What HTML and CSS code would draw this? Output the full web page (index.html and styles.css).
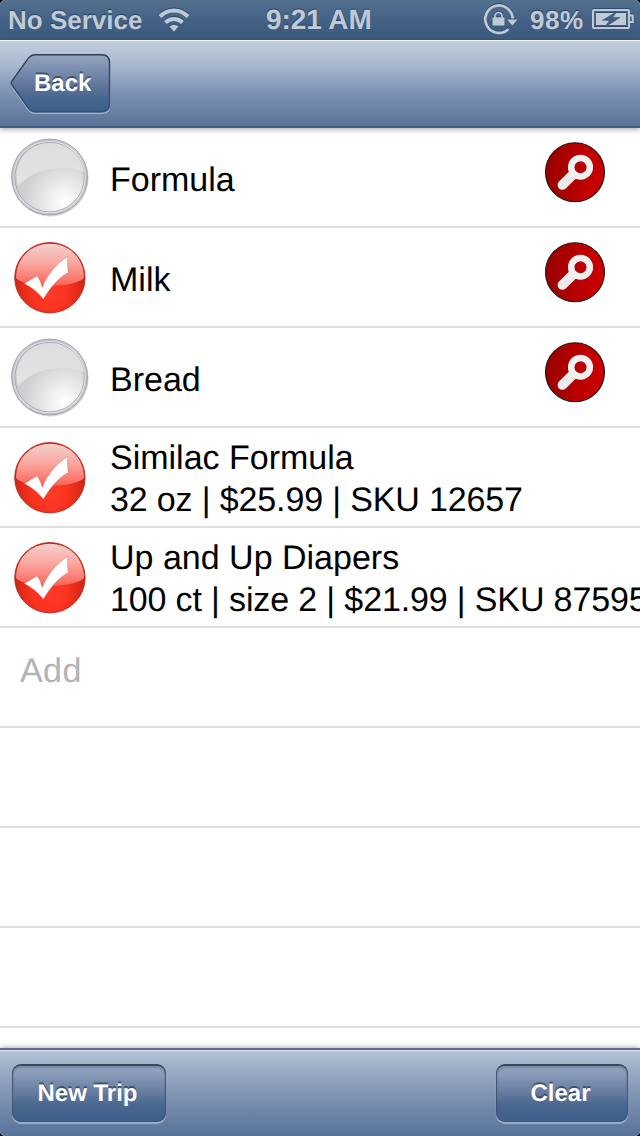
FILE: index.html
```html
<!DOCTYPE html>
<html lang="en">
<head>
<meta charset="utf-8">
<title>Shopping List</title>
<link rel="stylesheet" href="styles.css">
</head>
<body>
<svg class="defs" width="0" height="0" aria-hidden="true">
  <defs>
    <linearGradient id="btn" x1="0" y1="0" x2="0" y2="1"><stop offset="0" stop-color="#94a5bf"/><stop offset=".5" stop-color="#64799f"/><stop offset=".75" stop-color="#48678f"/><stop offset="1" stop-color="#3e5e8b"/></linearGradient>
    <linearGradient id="btnEdge" x1="0" y1="0" x2="0" y2="1"><stop offset="0" stop-color="#343f50"/><stop offset="1" stop-color="#34517a"/></linearGradient>
    <linearGradient id="rim" x1="0" y1="0" x2="1" y2="1"><stop offset="0" stop-color="#dcdce2"/><stop offset=".25" stop-color="#c0c0ca"/><stop offset=".5" stop-color="#d4d4dc"/><stop offset=".75" stop-color="#c4c4ce"/><stop offset="1" stop-color="#e2e2e8"/></linearGradient>
    <radialGradient id="glass" cx=".72" cy=".85" r=".75"><stop offset="0" stop-color="#fff"/><stop offset=".2" stop-color="#f4f4f4"/><stop offset=".75" stop-color="#d2d2d2"/><stop offset="1" stop-color="#c9c9c9"/></radialGradient>
    <linearGradient id="glassTop" x1="0" y1="0" x2="0" y2="1"><stop offset="0" stop-color="#dddddd"/><stop offset="1" stop-color="#e3e3e3"/></linearGradient>
    <radialGradient id="ball" cx=".5" cy=".7" r=".56"><stop offset="0" stop-color="#ff3a27"/><stop offset=".45" stop-color="#fb3321"/><stop offset=".8" stop-color="#d92817"/><stop offset="1" stop-color="#bd2213"/></radialGradient>
    <linearGradient id="ballTop" x1="0" y1="0" x2="0" y2="1"><stop offset="0" stop-color="#f3d0cc"/><stop offset=".45" stop-color="#fba9a2"/><stop offset="1" stop-color="#f8655a"/></linearGradient>
    <linearGradient id="key" x1="0" y1="0" x2="1" y2="0"><stop offset="0" stop-color="#9b0000"/><stop offset=".3" stop-color="#a80000"/><stop offset=".65" stop-color="#be0000"/><stop offset="1" stop-color="#cc0000"/></linearGradient>
    <symbol id="empty" viewBox="0 0 80 80">
      <circle cx="40.300" cy="40.200" r="38.300" fill="#999" opacity=".4"/>
      <circle cx="39.500" cy="39" r="37.900" fill="url(#rim)" stroke="#9a9aa2" stroke-width=".9"/>
      <circle cx="39.500" cy="39.100" r="34.800" fill="url(#glass)" stroke="#9c9ca4" stroke-width=".8"/>
      <path d="M8.500 48C1 27 17 5 39.500 5C58 5 72 18 73.800 34C57 26.500 24 29 8.500 48Z" fill="url(#glassTop)"/>
      <circle cx="39.500" cy="39.100" r="35.700" fill="none" stroke="#e9e9f0" stroke-width=".7"/>
    </symbol>
    <symbol id="checked" viewBox="0 0 80 80">
      <circle cx="39.900" cy="39.700" r="35.200" fill="url(#ball)" stroke="#b92b1f" stroke-width=".9"/>
      <path d="M6 40C6 20 21 5.800 40 5.800S74 20 74 40C70 45 54 47.500 44 47.500C29 47.500 12 46.500 6 40Z" fill="url(#ballTop)"/>
      <path d="M14.300 45.500L27 37.900C30 41.500 31 45 32.300 49.300C37 37 46 26 57.800 18.500C57.500 24 57.500 29 58.300 34.500C48 40 40 50 33.500 61.200C28 54.500 22 49.500 14.300 45.500Z" fill="#fff" stroke="#d26058" stroke-width=".4"/>
    </symbol>
    <symbol id="wrench" viewBox="0 0 64 64">
      <circle cx="32" cy="32.200" r="29.500" fill="url(#key)" stroke="#1d1515" stroke-width="1.100"/>
      <path d="M19.400 45L29.500 35" stroke="#ececec" stroke-width="9.600" stroke-linecap="round"/>
      <circle cx="37.500" cy="27.200" r="9.300" fill="none" stroke="#f0f0f0" stroke-width="6.500"/>
    </symbol>
  </defs>
</svg>
<div class="screen">
  <header class="status">
    <div class="status-left"><span class="carrier">No Service</span>
      <svg class="wifi" width="34" height="26" viewBox="0 0 34 26"><g fill="none" stroke="#c0cad6" stroke-width="4"><path d="M3 10.500C11 2.500 23 2.500 31 10.500"/><path d="M8.500 16.500C13.500 11.800 20.500 11.800 25.500 16.500"/></g><path d="M12.500 20.500Q17 17 21.500 20.500L17 25.500Z" fill="#c0cad6"/></svg>
    </div>
    <time class="clock">9:21 AM</time>
    <div class="status-right">
      <svg class="lock" width="36" height="34" viewBox="0 0 36 34"><path d="M26.500 27.100A13.700 13.700 0 1 1 30.700 16.500" fill="none" stroke="#c0cad6" stroke-width="2.700"/><path d="M25 17.500H35.500L30.300 23.500Z" fill="#c0cad6"/><rect x="10.500" y="15.300" width="12" height="8.200" rx="1" fill="#c0cad6"/><path d="M13 16v-2a3.500 3.500 0 0 1 7 0v2" fill="none" stroke="#c0cad6" stroke-width="1.700"/></svg>
      <span class="percent">98%</span>
      <svg class="battery" width="42" height="22" viewBox="0 0 42 22"><rect x="1" y="2" width="36" height="18" rx="1" fill="none" stroke="#c0cad6" stroke-width="2"/><path d="M38 7.500h2.700v6.500H38" fill="none" stroke="#c0cad6" stroke-width="2"/><rect x="4" y="5" width="30" height="12" fill="#c0cad6"/><path d="M25 3.500L10.500 12.300H17.500L13 19L28 9.500H20.500Z" fill="#405d82" stroke="#405d82" stroke-width=".7"/></svg>
    </div>
  </header>
  <nav class="navbar">
    <button class="back">
      <svg class="back-shape" width="102" height="61" viewBox="0 0 102 61"><path d="M25 1.500H92Q99.500 1.500 99.500 9V51Q99.500 58.500 92 58.500H25Q21 58.500 18 54.500L2 32Q.5 30 2 28L18 5.500Q21 1.500 25 1.500Z" transform="translate(0 1)" fill="none" stroke="#a5b5cb" stroke-width="1.200"/><path d="M25 .7H92Q99.500 .7 99.500 8.500V50Q99.500 57.500 92 57.500H25Q21 57.500 18 53.500L2 31Q.5 29 2 27L18 4.700Q21 .7 25 .7Z" fill="url(#btn)" stroke="url(#btnEdge)" stroke-width="1.400"/></svg>
      <span class="back-label">Back</span>
    </button>
  </nav>
  <main class="list">
    <div class="row"><svg class="mark"><use href="#empty"/></svg><div class="text single">Formula</div><svg class="tool"><use href="#wrench"/></svg></div>
    <div class="row"><svg class="mark"><use href="#checked"/></svg><div class="text single">Milk</div><svg class="tool"><use href="#wrench"/></svg></div>
    <div class="row"><svg class="mark"><use href="#empty"/></svg><div class="text single">Bread</div><svg class="tool"><use href="#wrench"/></svg></div>
    <div class="row"><svg class="mark"><use href="#checked"/></svg><div class="text"><div>Similac Formula</div><div class="detail">32 oz | $25.99 | SKU 12657</div></div></div>
    <div class="row"><svg class="mark"><use href="#checked"/></svg><div class="text"><div>Up and Up Diapers</div><div class="detail">100 ct | size 2 | $21.99 | SKU 87595</div></div></div>
    <div class="row add">Add</div>
    <div class="row"></div>
    <div class="row"></div>
    <div class="row"></div>
  </main>
  <footer class="toolbar"><button class="action new-trip">New Trip</button><button class="action clear">Clear</button></footer>
</div>
</body>
</html>
```

FILE: styles.css
```css
* { box-sizing: border-box; }
body { margin: 0; background: #000; font-family: "Liberation Sans", Arial, sans-serif; text-rendering: geometricPrecision; }
.defs { position: absolute; }
.screen { width: 640px; height: 1136px; display: flex; flex-direction: column; overflow: hidden; border-radius: 5px; background: #fff; }
.status { flex: none; height: 40px; display: grid; grid-template-columns: 1fr auto 1fr; padding: 0 6px 0 8px; background: linear-gradient(#54708f, #405e83 65%, #3d5a7f); color: #c0cad6; font-weight: bold; font-size: 26px; line-height: 40px; text-shadow: 0 -1px 1px #29405f; white-space: nowrap; }
.status-left, .status-right { display: flex; align-items: flex-start; }
.status-right { justify-content: flex-end; }
.status svg { filter: drop-shadow(0 -1px 0 #304b6e); }
.carrier { width: 134px; }
.wifi { margin: 6px 0 0 15px; }
.clock { font-size: 28px; width: 107px; margin-left: 0; margin-right: 3px; letter-spacing: -.1px; }
.lock { margin: 2px 12px 0 0; }
.percent { width: 55px; margin-right: 7px; letter-spacing: .6px; }
.battery { margin-top: 8px; }
.navbar { position: relative; z-index: 1; flex: none; height: 88px; padding: 13px 10px 0; background: linear-gradient(#c1cfde, #a9b9d1 28%, #8498b7 55%, #587399); border-bottom: 2px solid #3f5c84; border-top: 1px solid #f3f6fa; box-shadow: 0 2px 5px rgba(0,0,0,.3); }
button { border: 0; padding: 0; font: bold 24px/27px "Liberation Sans", Arial, sans-serif; color: #fff; text-shadow: 0 -2px 0 rgba(35,50,75,.65); text-rendering: geometricPrecision; }
.back { display: grid; width: 102px; height: 61px; background: none; text-align: left; }
.back-shape, .back-label { grid-area: 1 / 1; }
.back-label { padding: 16px 0 0 24px; position: relative; }
.list { flex: 1; min-height: 0; overflow: hidden; }
.row { height: 100px; border-bottom: 2px solid #dfdfdf; display: flex; align-items: flex-start; padding-left: 10px; font-size: 34px; line-height: 42px; color: #000; }
.mark { flex: none; width: 80px; height: 80px; margin: 10px 20px 0 0; }
.text { flex: 1; min-width: 0; white-space: nowrap; padding-top: 9px; }
.single { padding-top: 31px; }
.detail { letter-spacing: -.14px; }
.tool { flex: none; width: 64px; height: 64px; margin: 12px 33px 0 0; }
.add { padding: 22px 0 0 20px; color: #b3b3b3; letter-spacing: .4px; }
.toolbar { position: relative; flex: none; height: 88px; display: flex; justify-content: space-between; padding: 13px 12px 0; border-top: 2px solid #586f90; background: linear-gradient(#d3dbe7 0, #d3dbe7 1px, #b0bfd5 2px, #8599b8 45%, #587298); box-shadow: 0 -1px 5px rgba(0,0,0,.3); }
.action { height: 58px; margin-top: 1px; padding: 0 3px 0 0; border-radius: 9px; border: 1.5px solid #405473; border-top: 2px solid #3b4658; background: linear-gradient(#97a8c1, #667ba0 48%, #4a6890 70%, #3e5e8b); box-shadow: 0 2px 1px rgba(190,205,225,.65), inset 0 2px 2px rgba(35,50,75,.25); }
.new-trip { width: 154px; }
.clear { width: 132px; }
```
